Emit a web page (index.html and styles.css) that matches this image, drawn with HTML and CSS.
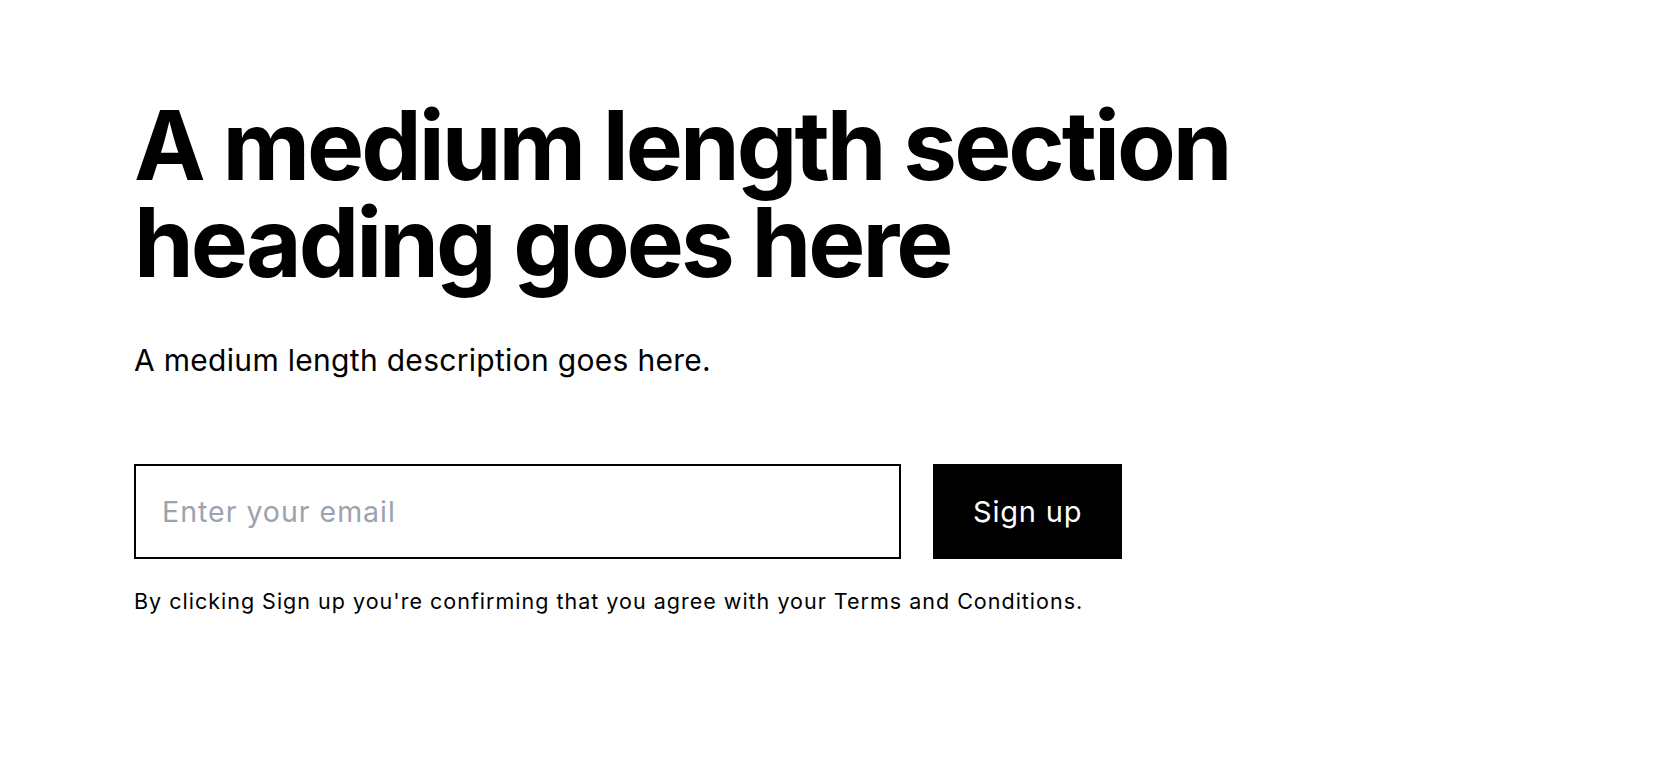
FILE: index.html
```html
<!DOCTYPE html>
<html lang="en">
<head>
  <meta charset="UTF-8" />
  <title>Section</title>
  <link rel="stylesheet" href="styles.css">
</head>
<body>
  <section class="cta">
    <div class="container">
      <h2 class="heading">A medium length section heading goes here</h2>
      <p class="desc">A medium length description goes here.</p>
      <form class="signup" onsubmit="return false">
        <input type="email" class="email" placeholder="Enter your email" />
        <button type="submit" class="btn">Sign up</button>
      </form>
      <p class="note">By clicking Sign up you're confirming that you agree with your Terms and Conditions.</p>
    </div>
  </section>
</body>
</html>
```

FILE: styles.css
```css
body {
  margin: 0;
  padding: 0;
  font-family: Inter, 'Noto Sans', sans-serif;
  background: #fff;
  color: #000;
}
.cta {
  padding: 97px 134px 0;
}
.container {
  max-width: 1200px;
}
.heading {
  margin: 0;
  font-size: 96px;
  line-height: 97px;
  font-weight: 700;
  letter-spacing: -3px;
}
.desc {
  margin: 47px 0 0;
  font-size: 30px;
  line-height: 1.5;
  letter-spacing: 0.3px;
}
.signup {
  display: flex;
  gap: 32px;
  margin-top: 81px;
}
.email {
  width: 767px;
  height: 95px;
  box-sizing: border-box;
  border: 2px solid #000;
  padding: 0 26px;
  font-family: inherit;
  font-size: 28.5px;
  letter-spacing: 1px;
  color: #000;
  outline: none;
}
.email::placeholder {
  color: #9ca3af;
}
.btn {
  height: 95px;
  padding: 0 40px;
  border: none;
  background: #000;
  color: #fff;
  font-family: inherit;
  font-size: 29px;
  letter-spacing: 0.8px;
  cursor: pointer;
}
.note {
  margin: 26px 0 0;
  font-size: 21.5px;
  line-height: 1.5;
  letter-spacing: 1px;
}
```
